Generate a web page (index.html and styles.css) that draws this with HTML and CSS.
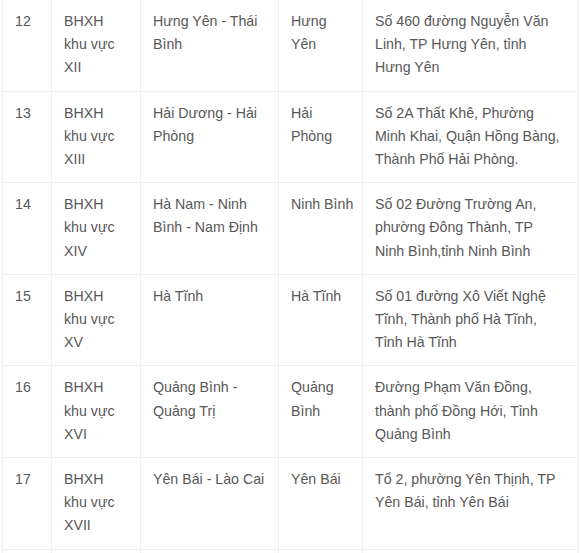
FILE: index.html
```html
<!DOCTYPE html>
<html lang="vi">
<head>
<meta charset="utf-8">
<title>BHXH khu vực</title>
<link rel="stylesheet" href="styles.css">
</head>
<body>
<table class="offices">
  <colgroup>
    <col class="c-no">
    <col class="c-name">
    <col class="c-area">
    <col class="c-seat">
    <col class="c-addr">
  </colgroup>
  <tbody>
    <tr>
      <td class="no">12</td>
      <td class="name">BHXH khu vực XII</td>
      <td class="area">Hưng Yên - Thái Bình</td>
      <td class="seat">Hưng Yên</td>
      <td class="addr">Số 460 đường Nguyễn Văn Linh, TP Hưng Yên, tỉnh Hưng Yên</td>
    </tr>
    <tr>
      <td class="no">13</td>
      <td class="name">BHXH khu vực XIII</td>
      <td class="area">Hải Dương - Hải Phòng</td>
      <td class="seat">Hải Phòng</td>
      <td class="addr">Số 2A Thất Khê, Phường Minh Khai, Quận Hồng Bàng, Thành Phố Hải Phòng.</td>
    </tr>
    <tr>
      <td class="no">14</td>
      <td class="name">BHXH khu vực XIV</td>
      <td class="area">Hà Nam - Ninh Bình - Nam Định</td>
      <td class="seat">Ninh Bình</td>
      <td class="addr">Số 02 Đường Trường An, phường Đông Thành, TP Ninh Bình,tỉnh Ninh Bình</td>
    </tr>
    <tr>
      <td class="no">15</td>
      <td class="name">BHXH khu vực XV</td>
      <td class="area">Hà Tĩnh</td>
      <td class="seat">Hà Tĩnh</td>
      <td class="addr">Số 01 đường Xô Viết Nghệ Tĩnh, Thành phố Hà Tĩnh, Tỉnh Hà Tĩnh</td>
    </tr>
    <tr>
      <td class="no">16</td>
      <td class="name">BHXH khu vực XVI</td>
      <td class="area">Quảng Bình - Quảng Trị</td>
      <td class="seat">Quảng Bình</td>
      <td class="addr">Đường Phạm Văn Đồng, thành phố Đồng Hới, Tỉnh Quảng Bình</td>
    </tr>
    <tr>
      <td class="no">17</td>
      <td class="name">BHXH khu vực XVII</td>
      <td class="area">Yên Bái - Lào Cai</td>
      <td class="seat">Yên Bái</td>
      <td class="addr">Tổ 2, phường Yên Thịnh, TP Yên Bái, tỉnh Yên Bái</td>
    </tr>
    <tr class="spacer">
      <td>&nbsp;</td>
      <td>&nbsp;</td>
      <td>&nbsp;</td>
      <td>&nbsp;</td>
      <td>&nbsp;</td>
    </tr>
  </tbody>
</table>
</body>
</html>
```

FILE: styles.css
```css
html, body {
  margin: 0;
  padding: 0;
  background: #ffffff;
}

.offices {
  border-collapse: collapse;
  table-layout: fixed;
  width: 575px;
  margin: -1px 0 0 2px;
  font-family: "Liberation Sans", Arial, sans-serif;
  font-size: 14.2px;
  line-height: 23.2px;
  color: #585858;
}

.c-no { width: 49px; }
.c-name { width: 89px; }
.c-area { width: 138px; }
.c-seat { width: 84px; }
.c-addr { width: 215px; }

.offices td {
  border: 1px solid #efefef;
  padding: 10px 12px 11px 12px;
  vertical-align: top;
  text-align: left;
}

.offices td.name { padding-right: 14px; }
.offices td.seat { padding-right: 8px; }
.offices td.addr { padding-right: 15px; }

.offices .spacer td {
  height: 70px;
}
```
